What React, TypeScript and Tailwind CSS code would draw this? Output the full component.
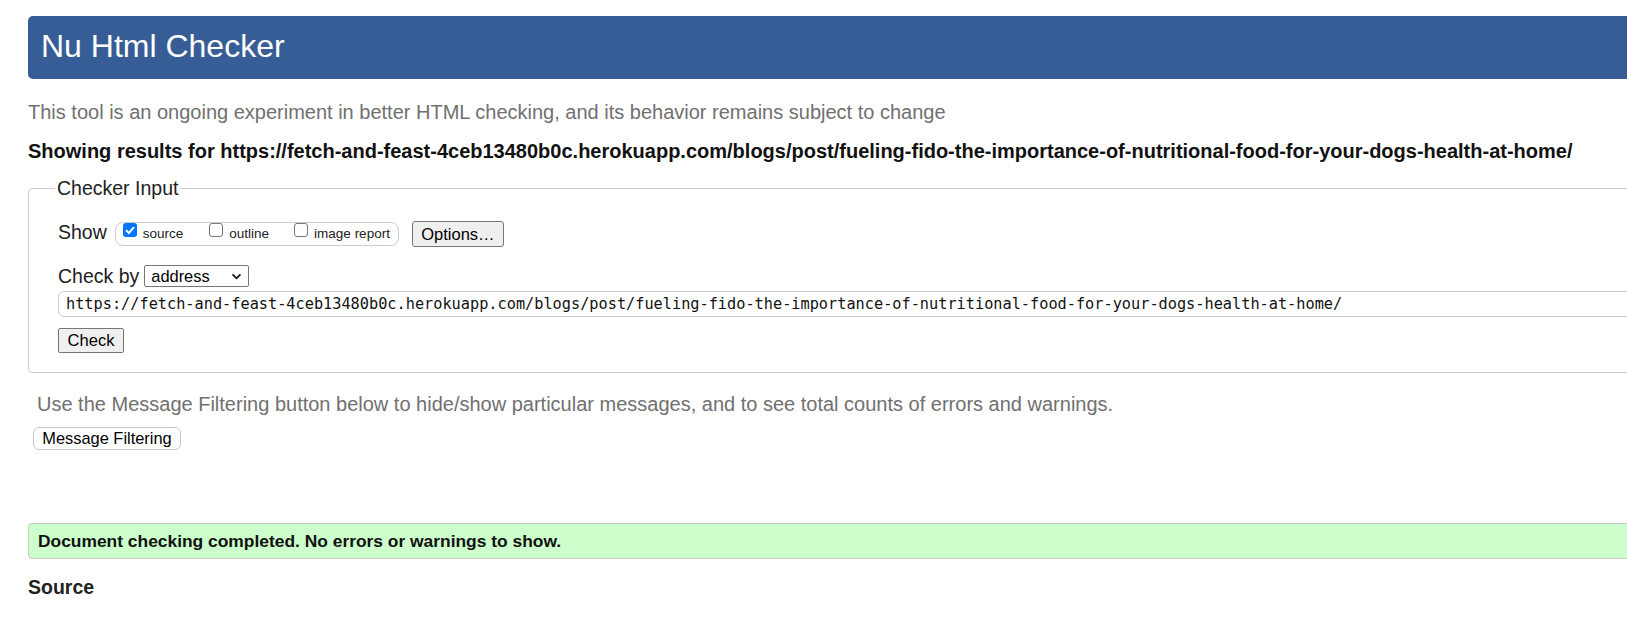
const pageUrl =
  'https://fetch-and-feast-4ceb13480b0c.herokuapp.com/blogs/post/fueling-fido-the-importance-of-nutritional-food-for-your-dogs-health-at-home/';

const Box = ({ checked, className = '' }: { checked?: boolean; className?: string }) =>
  checked ? (
    <span className={`flex h-[14px] w-[14px] shrink-0 items-center justify-center rounded-[3px] bg-[#0075ff] ${className}`}>
      <svg viewBox="0 0 14 14" className="h-[14px] w-[14px]">
        <path d="M3 7.2l2.8 2.8L11 4.2" fill="none" stroke="white" strokeWidth="2" />
      </svg>
    </span>
  ) : (
    <span className={`block h-[14px] w-[14px] shrink-0 rounded-[3px] border border-[#767676] bg-white ${className}`} />
  );

const App = () => {
  return (
    <div className="h-[626px] w-[1627px] overflow-hidden bg-white font-['Liberation_Sans',Arial,sans-serif] text-black">
      <div className="ml-[28px] w-[1660px] pt-[16px]">
        {/* Header */}
        <header className="flex h-[63px] items-center rounded-l-[5px] bg-[#365d95] pb-[3px] pl-[13px]">
          <h1 className="text-[32px] leading-none text-white">Nu Html Checker</h1>
        </header>

        <p className="mt-[21px] text-[20px] leading-[24px] text-[#707070]">
          This tool is an ongoing experiment in better HTML checking, and its behavior remains subject to change
        </p>
        <p className="mt-[15px] text-[20px] font-bold leading-[24px] text-[#111]">
          Showing results for {pageUrl}
        </p>

        {/* Checker Input */}
        <fieldset className="mt-[13px] rounded-[4px] border border-[#ccc] pb-[19px] pl-[29px] pt-[21px]">
          <legend className="-ml-[3px] px-[2px] text-[19.5px] leading-[24px] text-[#222]">Checker Input</legend>

          <div className="flex h-[26px] items-center">
            <span className="mb-[5px] text-[19.5px] leading-[22px] text-[#222]">Show</span>
            <div className="ml-[8px] flex h-[24px] items-start rounded-[8px] border border-[#ccc] pl-[7px] pr-[8px] text-[13.5px] leading-[20px] text-[#222]">
              <Box checked />
              <span className="ml-[6px] mt-[1px]">source</span>
              <Box className="ml-[26px]" />
              <span className="ml-[6px] mt-[1px]">outline</span>
              <Box className="ml-[25px]" />
              <span className="ml-[6px] mt-[1px]">image report</span>
            </div>
            <button className="ml-[13px] flex h-[26px] w-[92px] items-center justify-center rounded-[3px] border border-[#767676] bg-[#efefef] text-[16.5px]">
              Options…
            </button>
          </div>

          <div className="mt-[18px] flex h-[22px] items-center">
            <span className="text-[19.5px] leading-[22px] text-[#222]">Check by</span>
            <div className="ml-[5px] flex h-[22px] w-[105px] items-center justify-between rounded-[2px] border border-[#767676] pl-[6px] pr-[6px] text-[16.4px]">
              <span>address</span>
              <svg viewBox="0 0 12 8" className="h-[7px] w-[11px]">
                <path d="M1.5 1.5L6 6l4.5-4.5" fill="none" stroke="#111" strokeWidth="2" />
              </svg>
            </div>
          </div>

          <div className="mt-[4px] flex h-[26px] items-center rounded-[6px] border border-[#ccc] pl-[7px] font-['DejaVu_Sans_Mono',monospace] text-[15.25px] text-[#111]">
            {pageUrl}
          </div>

          <button className="mt-[11px] flex h-[25px] w-[66px] items-center justify-center rounded-[2px] border border-[#767676] bg-[#efefef] text-[16.5px]">
            Check
          </button>
        </fieldset>

        <p className="ml-[9px] mt-[19px] text-[20px] leading-[24px] text-[#707070]">
          Use the Message Filtering button below to hide/show particular messages, and to see total counts of errors and warnings.
        </p>
        <button className="ml-[5px] mt-[11px] flex h-[23px] w-[148px] items-center justify-center rounded-[6px] border border-[#c8c8c8] bg-white text-[16.4px]">
          Message Filtering
        </button>

        {/* Result */}
        <div className="mt-[73px] flex h-[36px] items-center rounded-l-[4px] border border-[#c8c8c8] bg-[#ccffcc] pl-[9px] text-[17.4px] font-bold text-[#111]">
          Document checking completed. No errors or warnings to show.
        </div>

        <h2 className="mt-[16px] text-[19.5px] font-bold leading-[24px] text-[#222]">Source</h2>
      </div>
    </div>
  );
};

export default App;
